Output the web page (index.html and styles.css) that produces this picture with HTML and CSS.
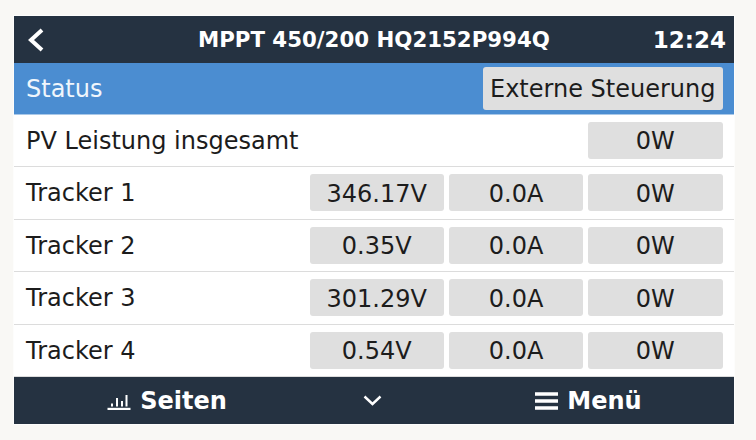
FILE: index.html
```html
<!DOCTYPE html>
<html lang="de">
<head>
<meta charset="utf-8">
<title>MPPT</title>
<link rel="stylesheet" href="styles.css">
</head>
<body>
<main class="screen">
  <header class="topbar">
    <svg class="back" width="18" height="26" viewBox="0 0 18 26"><path d="M15 3 4 13l11 10" fill="none" stroke="#fff" stroke-width="4"/></svg>
    <div class="title">MPPT 450/200 HQ2152P994Q</div>
    <div class="clock">12:24</div>
  </header>
  <section class="status">
    <span>Status</span>
    <span class="tag">Externe Steuerung</span>
  </section>
  <section class="row first">
    <span class="label">PV Leistung insgesamt</span>
    <div class="cells"><span class="cell"></span><span class="cell"></span><span class="cell">0W</span></div>
  </section>
  <section class="row">
    <span class="label">Tracker 1</span>
    <div class="cells"><span class="cell">346.17V</span><span class="cell">0.0A</span><span class="cell">0W</span></div>
  </section>
  <section class="row">
    <span class="label">Tracker 2</span>
    <div class="cells"><span class="cell">0.35V</span><span class="cell">0.0A</span><span class="cell">0W</span></div>
  </section>
  <section class="row">
    <span class="label">Tracker 3</span>
    <div class="cells"><span class="cell">301.29V</span><span class="cell">0.0A</span><span class="cell">0W</span></div>
  </section>
  <section class="row">
    <span class="label">Tracker 4</span>
    <div class="cells"><span class="cell">0.54V</span><span class="cell">0.0A</span><span class="cell">0W</span></div>
  </section>
  <footer class="bottombar">
    <div class="foot foot-left">
      <svg width="24" height="18" viewBox="0 0 24 18"><path d="M0.500 17h23" fill="none" stroke="#fff" stroke-width="2.400"/><path d="M5 14.500v-3M10 14.500V6M15 14.500V9M19.500 14.500V3" fill="none" stroke="#fff" stroke-width="2"/></svg>
      <span>Seiten</span>
    </div>
    <div class="foot foot-mid">
      <svg width="19" height="11" viewBox="0 0 19 11"><path d="M1.500 1.500 9.500 9l8-7.500" fill="none" stroke="#fff" stroke-width="2.400"/></svg>
    </div>
    <div class="foot foot-right">
      <svg width="23" height="18" viewBox="0 0 23 18"><path d="M0 2h23M0 9h23M0 16h23" fill="none" stroke="#fff" stroke-width="3.600"/></svg>
      <span>Menü</span>
    </div>
  </footer>
</main>
</body>
</html>
```
FILE: styles.css
```css
* { box-sizing: border-box; }
html, body { margin: 0; height: 100%; }
body {
  background: #f9f8f5;
  padding: 16px 22px 16px 14px;
  font-family: "DejaVu Sans", sans-serif;
  font-size: 24px;
  color: #1c1c1c;
}
.screen {
  width: 720px;
  height: 408px;
  background: #fff;
  box-shadow: 0 0 0 1px #fdfdfc;
  display: flex;
  flex-direction: column;
}
.topbar {
  height: 47px;
  flex: none;
  background: #253241;
  color: #fff;
  font-weight: 700;
  display: grid;
  grid-template-columns: 171px 1fr auto;
  align-items: center;
  padding: 0 8px 0 13px;
}
.title { font-size: 21.300px; }
.clock { font-size: 23px; }
.status {
  height: 51.700px;
  flex: none;
  background: #4b8dd1;
  color: #f0f6fc;
  display: flex;
  align-items: center;
  justify-content: space-between;
  padding: 1px 11.500px 0 12px;
  border-bottom: 1px solid #a9c8e8;
}
.tag {
  height: 43px;
  display: flex;
  align-items: center;
  padding: 0 7px;
  background: #dfdfdf;
  color: #1c1c1c;
  border-radius: 3px;
}
.row {
  flex: 1;
  display: flex;
  align-items: center;
  justify-content: space-between;
  padding: 0 11.500px 0 12px;
  border-bottom: 1px solid #dcdcdc;
}
.label { padding-top: 1px; }
.cells { display: flex; gap: 5px; }
.cell {
  width: 134.300px;
  height: 37px;
  padding-top: 2px;
  display: flex;
  align-items: center;
  justify-content: center;
  background: #dfdfdf;
  border-radius: 3px;
}
.cell:empty { visibility: hidden; }
.bottombar {
  height: 46.800px;
  flex: none;
  background: #253241;
  color: #fff;
  font-weight: 700;
  display: grid;
  grid-template-columns: 306px 104px 1fr;
  align-items: center;
}
.foot { display: flex; align-items: center; justify-content: center; gap: 9px; }
.foot-right { padding-left: 19px; }
```
